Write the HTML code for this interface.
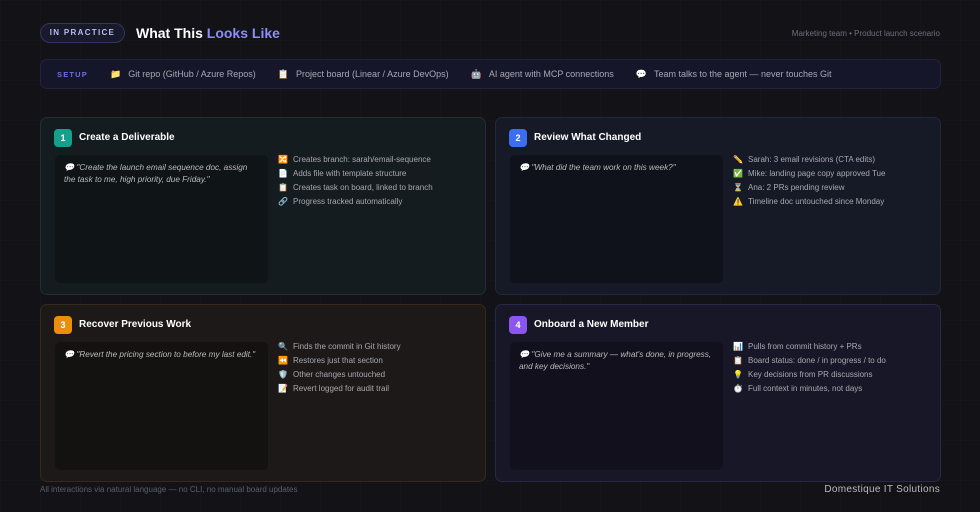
<!DOCTYPE html>
<html><head><meta charset="utf-8"><style>
*{margin:0;padding:0;box-sizing:border-box}
body{width:980px;height:512px;overflow:hidden;background:#121217;font-family:"Liberation Sans","DejaVu Sans",sans-serif;color:#ddd;position:relative;
background-image:linear-gradient(rgba(255,255,255,0.012) 1px,transparent 1px),linear-gradient(90deg,rgba(255,255,255,0.012) 1px,transparent 1px);background-size:40px 40px}
.abs{position:absolute}
.pill{left:40px;top:23px;width:85px;height:20px;border:1px solid #34345e;border-radius:10px;background:#19192c;color:#b8bcf0;font-size:8px;font-weight:bold;letter-spacing:1.3px;text-align:center;line-height:18px}
.title{left:136px;top:25px;font-size:14px;font-weight:bold;color:#fff}
.title span{color:#8b8ff5}
.sub{right:40px;top:29px;font-size:8px;color:#6f6f78}
.setup{left:40px;top:59px;width:901px;height:30px;border:1px solid #23233f;border-radius:7px;background:#16162a;font-size:9px;color:#a8a8b0;display:flex;align-items:center;padding-left:16px}
.setup b{color:#6a6ee8;font-size:7.5px;letter-spacing:1.2px;margin-right:22px}
.setup .it{margin-right:22px;display:flex;align-items:center}
.setup .it i{font-style:normal;font-size:9px;margin-right:7px}
.card{position:absolute;width:446px;height:178px;border-radius:7px;border:1px solid}
.c1{left:40px;top:117px;background:#151c20;border-color:#1f2f32}
.c2{left:495px;top:117px;background:#161926;border-color:#212741}
.c3{left:40px;top:304px;background:#1c1918;border-color:#36291b}
.c4{left:495px;top:304px;background:#181727;border-color:#292846}
.num{position:absolute;left:13px;top:11px;width:18px;height:18px;border-radius:4px;color:#fff;font-size:9px;font-weight:bold;text-align:center;line-height:18px}
.ct{position:absolute;left:38px;top:14px;font-size:10px;font-weight:bold;color:#fff}
.q{position:absolute;left:14px;top:37px;width:213px;height:128px;border-radius:5px;background:rgba(0,0,0,0.28);padding:7px 9px;font-size:8.2px;font-style:italic;color:#bbb;line-height:12px}
.ls{position:absolute;left:237px;top:35px;font-size:8px;color:#a8a8b0;line-height:14px;list-style:none}
.ls li i{font-style:normal;display:inline-block;width:15px;font-size:8px}
.foot{left:40px;top:485px;font-size:8px;color:#5f5f68}
.brand{right:40px;top:484px;font-size:10px;color:#bbb;letter-spacing:.3px}
</style></head><body>
<div class="abs pill">IN PRACTICE</div>
<div class="abs title">What This <span>Looks Like</span></div>
<div class="abs sub">Marketing team • Product launch scenario</div>
<div class="abs setup"><b>SETUP</b>
<div class="it"><i>📁</i>Git repo (GitHub / Azure Repos)</div>
<div class="it"><i>📋</i>Project board (Linear / Azure DevOps)</div>
<div class="it"><i>🤖</i>AI agent with MCP connections</div>
<div class="it"><i>💬</i>Team talks to the agent — never touches Git</div>
</div>
<div class="card c1"><div class="num" style="background:#14a08a">1</div><div class="ct">Create a Deliverable</div>
<div class="q">💬 "Create the launch email sequence doc, assign the task to me, high priority, due Friday."</div>
<ul class="ls"><li><i>🔀</i>Creates branch: sarah/email-sequence</li><li><i>📄</i>Adds file with template structure</li><li><i>📋</i>Creates task on board, linked to branch</li><li><i>🔗</i>Progress tracked automatically</li></ul></div>
<div class="card c2"><div class="num" style="background:#3b6ef0">2</div><div class="ct">Review What Changed</div>
<div class="q">💬 "What did the team work on this week?"</div>
<ul class="ls"><li><i>✏️</i>Sarah: 3 email revisions (CTA edits)</li><li><i>✅</i>Mike: landing page copy approved Tue</li><li><i>⏳</i>Ana: 2 PRs pending review</li><li><i>⚠️</i>Timeline doc untouched since Monday</li></ul></div>
<div class="card c3"><div class="num" style="background:#e8900c">3</div><div class="ct">Recover Previous Work</div>
<div class="q">💬 "Revert the pricing section to before my last edit."</div>
<ul class="ls"><li><i>🔍</i>Finds the commit in Git history</li><li><i>⏪</i>Restores just that section</li><li><i>🛡️</i>Other changes untouched</li><li><i>📝</i>Revert logged for audit trail</li></ul></div>
<div class="card c4"><div class="num" style="background:#8a55f0">4</div><div class="ct">Onboard a New Member</div>
<div class="q">💬 "Give me a summary — what's done, in progress, and key decisions."</div>
<ul class="ls"><li><i>📊</i>Pulls from commit history + PRs</li><li><i>📋</i>Board status: done / in progress / to do</li><li><i>💡</i>Key decisions from PR discussions</li><li><i>⏱️</i>Full context in minutes, not days</li></ul></div>
<div class="abs foot">All interactions via natural language — no CLI, no manual board updates</div>
<div class="abs brand">Domestique IT Solutions</div>
</body></html>
